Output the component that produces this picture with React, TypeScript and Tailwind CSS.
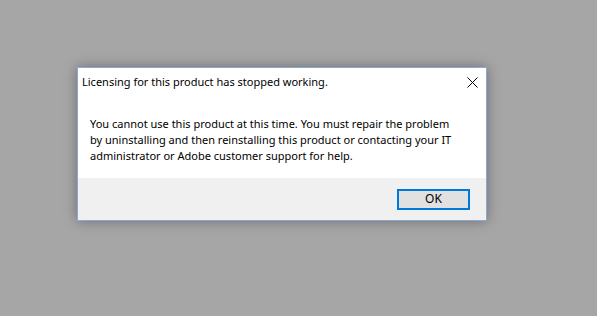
export default function App() {
  return (
    <div className="w-[597px] h-[316px] bg-[#a6a6a6] pt-[67px] pl-[77px]" style={{ fontFamily: '"Noto Sans", "Segoe UI", sans-serif' }}>
      <div className="w-[410px] h-[154px] border border-[#87a9d3] bg-white flex flex-col shadow-[0_0_12px_rgba(0,0,0,0.35)]">
        <div className="h-[24px] flex items-center justify-between pl-[4px] pr-[8px] pt-[3px]">
          <span className="text-[11px] text-black leading-none">Licensing for this product has stopped working.</span>
          <svg width="11" height="11" viewBox="0 0 11 11" className="mt-[1px]">
            <path d="M0.5 0.5 L10.5 10.5 M10.5 0.5 L0.5 10.5" stroke="#000" strokeWidth="1" />
          </svg>
        </div>
        <div className="flex-1 pl-[12px] pt-[24px] text-[11px] leading-[16px] text-black">
          <p>You cannot use this product at this time. You must repair the problem</p>
          <p>by uninstalling and then reinstalling this product or contacting your IT</p>
          <p>administrator or Adobe customer support for help.</p>
        </div>
        <div className="h-[42px] bg-[#f0f0f0] flex items-center justify-end pr-[16px]">
          <button className="w-[73px] h-[21px] border-2 border-[#0078d7] bg-[#e1e1e1] text-[12px] text-black leading-none flex items-center justify-center">
            OK
          </button>
        </div>
      </div>
    </div>
  );
}
